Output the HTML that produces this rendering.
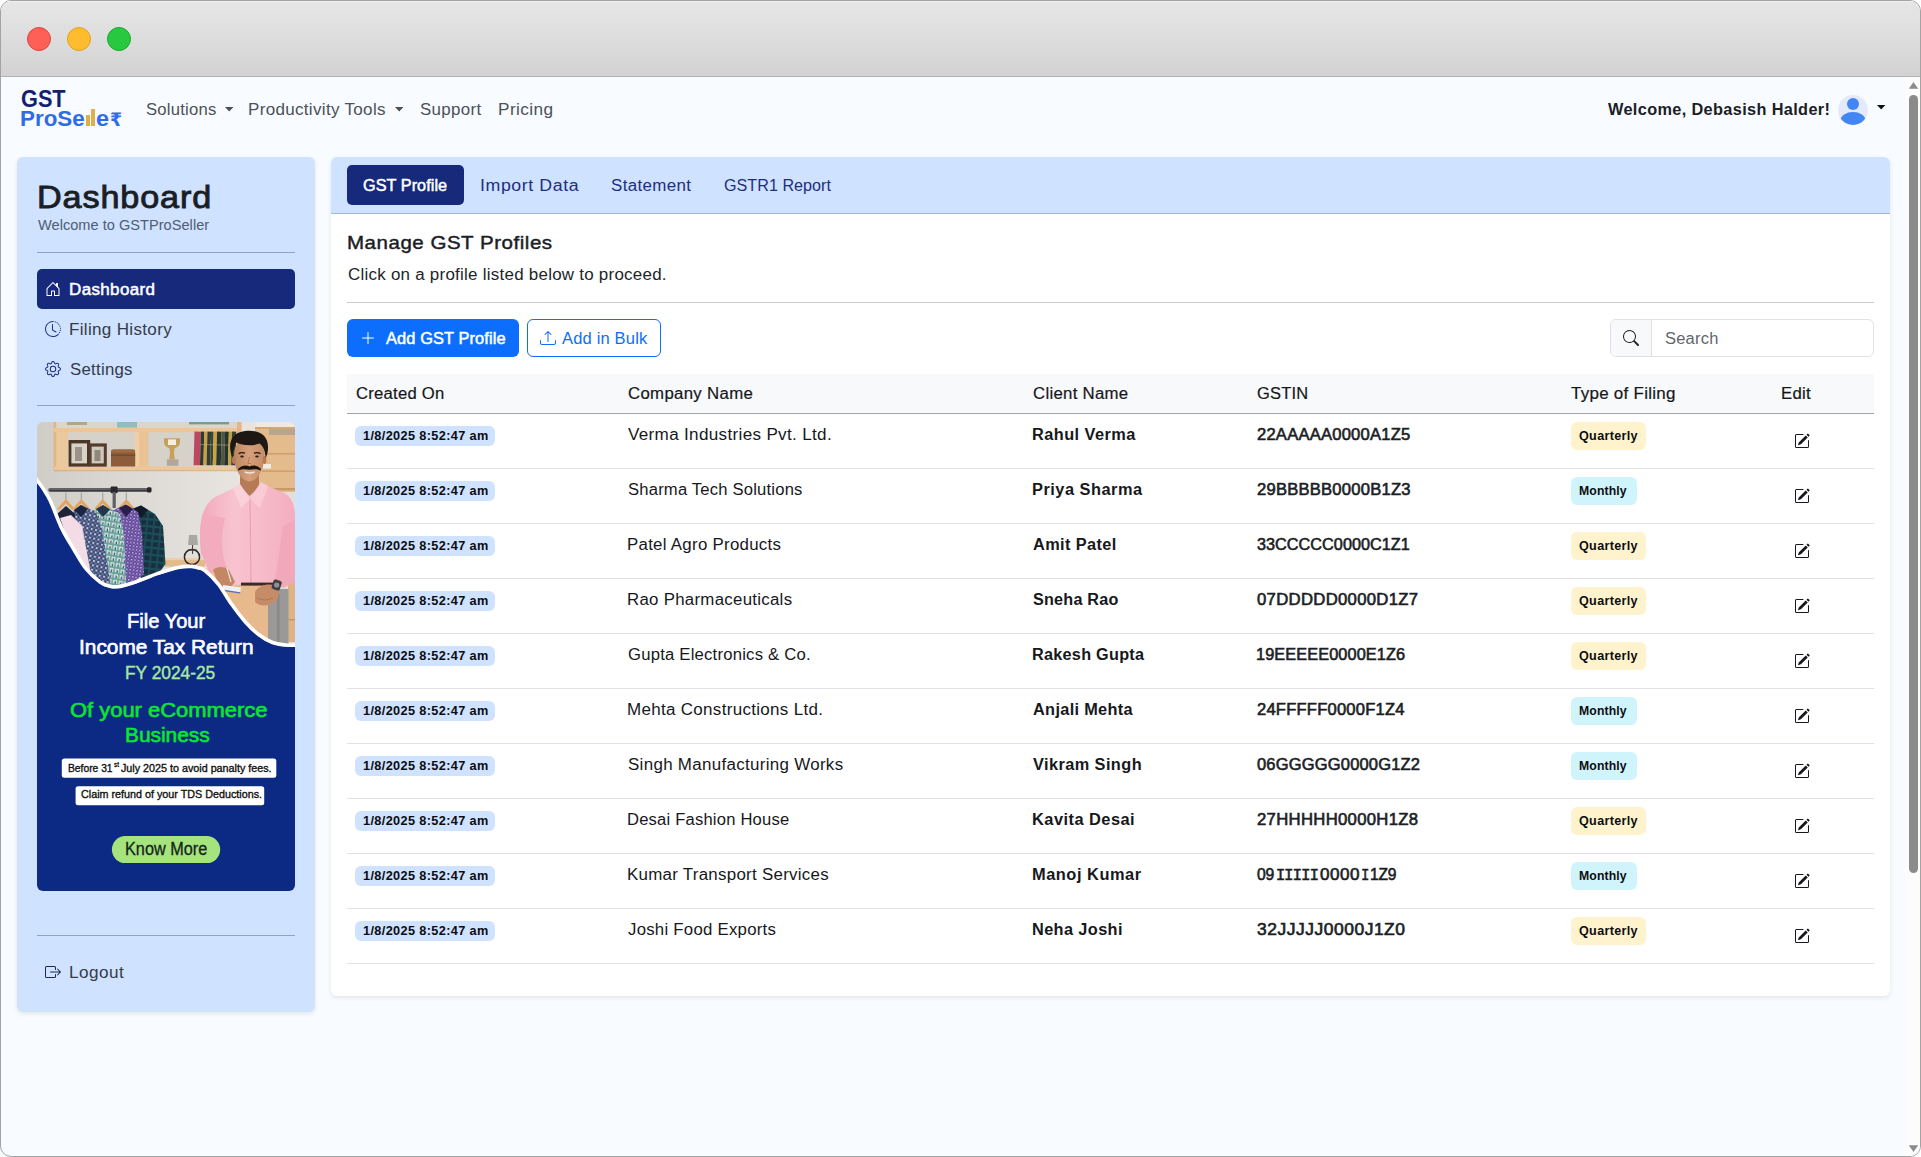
<!DOCTYPE html><html lang="en"><head><meta charset="utf-8"><title>GSTProSeller Dashboard</title><style>
*{box-sizing:border-box}
html,body{margin:0;padding:0}
body{width:1921px;height:1157px;overflow:hidden;background:#fff;font-family:"Liberation Sans",sans-serif}
.a,.t,.ic{position:absolute}
.t{white-space:pre;line-height:1;transform-origin:0 0;display:block}
.win{position:absolute;left:0;top:0;width:1921px;height:1157px;border:1px solid #a3a3a3;border-radius:11px;overflow:hidden;background:#f8fbff}
.tb{left:0;top:0;width:1919px;height:76px;background:linear-gradient(#e6e6e6,#dfdfdf 40%,#d2d2d2);border-bottom:1px solid #b2b2b2;box-shadow:inset 0 1px 0 #f2f2f2}
.dot{width:24px;height:24px;border-radius:50%;top:26px}
.side{left:16px;top:156px;width:298px;height:855px;background:#cfe2ff;border-radius:6px;box-shadow:0 2px 5px rgba(0,0,0,.09)}
.hr{height:1px;background:#8ea3c6}
.card{left:330px;top:156px;width:1559px;height:839px;background:#fff;border-radius:6px;box-shadow:0 2px 5px rgba(0,0,0,.09)}
.chead{left:330px;top:156px;width:1559px;height:57px;background:#cfe2ff;border-radius:6px 6px 0 0;border-bottom:1px solid #a4b6d4}
.pill{background:#16297b;border-radius:5px}
.rb{left:346px;width:1527px;height:1px;background:#dee2e6}
.bd{height:20px;left:354px;width:140px;background:#cfe2ff;border-radius:6px}
.bq{height:28px;left:1570px;width:75px;background:#fff3cd;border-radius:6px}
.bm{height:28px;left:1570px;width:66px;background:#cff4fc;border-radius:6px}
</style></head><body>
<div class="win">
<div class="a tb"></div>
<div class="a dot" style="left:26px;background:#fe5f57;border:1px solid #e0443e"></div>
<div class="a dot" style="left:66px;background:#febc2e;border:1px solid #dea123"></div>
<div class="a dot" style="left:106px;background:#28c840;border:1px solid #1aab29"></div>
<div class="a" style="left:1905px;top:76px;width:14px;height:1080px;background:#fcfcfc"></div>
<div class="a" style="left:1908px;top:94px;width:9px;height:778px;border-radius:4.5px;background:#8b8b8b"></div>
<svg class="ic" style="left:1907px;top:80px" width="11" height="9" viewBox="0 0 11 9"><path d="M5.5 1 L10.2 7.8 H0.8Z" fill="#8b8b8b"/></svg>
<svg class="ic" style="left:1907px;top:1143px" width="11" height="9" viewBox="0 0 11 9"><path d="M5.5 8 L10.2 1.2 H0.8Z" fill="#8b8b8b"/></svg>
<svg class="ic" style="left:224.0px;top:106px" width="8.4" height="4.6" viewBox="0 0 8.4 4.6"><path d="M0 0H8.4L4.2 4.6Z" fill="#4c5158"/></svg>
<svg class="ic" style="left:394.1px;top:106px" width="8.4" height="4.6" viewBox="0 0 8.4 4.6"><path d="M0 0H8.4L4.2 4.6Z" fill="#4c5158"/></svg>
<svg class="ic" style="left:1876.4px;top:104px" width="8.4" height="4.6" viewBox="0 0 8.4 4.6"><path d="M0 0H8.4L4.2 4.6Z" fill="#111"/></svg>
<svg class="ic" style="left:1837px;top:94px" width="30" height="30" viewBox="0 0 30 30"><defs><clipPath id="av"><circle cx="15" cy="15" r="15"/></clipPath></defs><circle cx="15" cy="15" r="15" fill="#e4e9fb"/><g clip-path="url(#av)" fill="#4285f4"><circle cx="15" cy="9" r="6"/><ellipse cx="15" cy="25.5" rx="12.5" ry="8.5"/></g></svg>
<div class="a" style="left:84.6px;top:114px;width:4.6px;height:11px;background:#e2ad45"></div>
<div class="a" style="left:90.2px;top:107.7px;width:4px;height:17.3px;background:#ddb04a"></div>
<div class="a side"></div>
<div class="a hr" style="left:36px;top:251px;width:258px"></div>
<div class="a pill" style="left:36px;top:268px;width:258px;height:40px"></div>
<svg class="ic" style="left:43.5px;top:280px" width="16" height="16" viewBox="0 0 16 16" fill="#ffffff"><path d="M8.354 1.146a.5.5 0 0 0-.708 0l-6 6A.5.5 0 0 0 1.5 7.5v7a.5.5 0 0 0 .5.5h4.5a.5.5 0 0 0 .5-.5v-4h2v4a.5.5 0 0 0 .5.5H14a.5.5 0 0 0 .5-.5v-7a.5.5 0 0 0-.146-.354L13 5.793V2.5a.5.5 0 0 0-.5-.5h-1a.5.5 0 0 0-.5.5v1.293L8.354 1.146ZM2.5 14V7.707l5.5-5.5 5.5 5.5V14H10v-4a.5.5 0 0 0-.5-.5h-3a.5.5 0 0 0-.5.5v4H2.5Z"/></svg>
<svg class="ic" style="left:43.5px;top:320px" width="16" height="16" viewBox="0 0 16 16" fill="#23307c"><path d="M8.515 1.019A7 7 0 0 0 8 1V0a8 8 0 0 1 .589.022l-.074.997zm2.004.45a7.003 7.003 0 0 0-.985-.299l.219-.976c.383.086.76.2 1.126.342l-.36.933zm1.37.71a7.01 7.01 0 0 0-.439-.27l.493-.87a8.025 8.025 0 0 1 .979.654l-.615.789a6.996 6.996 0 0 0-.418-.302zm1.834 1.79a6.99 6.99 0 0 0-.653-.796l.724-.69c.27.285.52.59.747.91l-.818.576zm.744 1.352a7.08 7.08 0 0 0-.214-.468l.893-.45a7.976 7.976 0 0 1 .45 1.088l-.95.313a7.023 7.023 0 0 0-.179-.483zm.53 2.507a6.991 6.991 0 0 0-.1-1.025l.985-.17c.067.386.106.778.116 1.17l-1 .025zm-.131 1.538c.033-.17.06-.339.081-.51l.993.123a7.957 7.957 0 0 1-.23 1.155l-.964-.267c.046-.165.086-.332.12-.501zm-.952 2.379c.184-.29.346-.594.486-.908l.914.405c-.16.36-.345.706-.555 1.038l-.845-.535zm-.964 1.205c.122-.122.239-.248.35-.378l.758.653a8.073 8.073 0 0 1-.401.432l-.707-.707z"/><path d="M8 1a7 7 0 1 0 4.95 11.95l.707.707A8.001 8.001 0 1 1 8 0v1z"/><path d="M7.5 3a.5.5 0 0 1 .5.5v5.21l3.248 1.856a.5.5 0 0 1-.496.868l-3.5-2A.5.5 0 0 1 7 9V3.5a.5.5 0 0 1 .5-.5z"/></svg>
<svg class="ic" style="left:43.5px;top:360px" width="16" height="16" viewBox="0 0 16 16" fill="#23307c"><path d="M8 4.754a3.246 3.246 0 1 0 0 6.492 3.246 3.246 0 0 0 0-6.492zM5.754 8a2.246 2.246 0 1 1 4.492 0 2.246 2.246 0 0 1-4.492 0z"/><path d="M9.796 1.343c-.527-1.79-3.065-1.79-3.592 0l-.094.319a.873.873 0 0 1-1.255.52l-.292-.16c-1.64-.892-3.433.902-2.54 2.541l.159.292a.873.873 0 0 1-.52 1.255l-.319.094c-1.79.527-1.79 3.065 0 3.592l.319.094a.873.873 0 0 1 .52 1.255l-.16.292c-.892 1.64.901 3.434 2.541 2.54l.292-.159a.873.873 0 0 1 1.255.52l.094.319c.527 1.79 3.065 1.79 3.592 0l.094-.319a.873.873 0 0 1 1.255-.52l.292.16c1.64.893 3.434-.902 2.54-2.541l-.159-.292a.873.873 0 0 1 .52-1.255l.319-.094c1.79-.527 1.79-3.065 0-3.592l-.319-.094a.873.873 0 0 1-.52-1.255l.16-.292c.893-1.64-.902-3.433-2.541-2.54l-.292.159a.873.873 0 0 1-1.255-.52l-.094-.319zm-2.633.283c.246-.835 1.428-.835 1.674 0l.094.319a1.873 1.873 0 0 0 2.693 1.115l.291-.16c.764-.415 1.6.42 1.184 1.185l-.159.292a1.873 1.873 0 0 0 1.116 2.692l.318.094c.835.246.835 1.428 0 1.674l-.319.094a1.873 1.873 0 0 0-1.115 2.693l.16.291c.415.764-.42 1.6-1.185 1.184l-.291-.159a1.873 1.873 0 0 0-2.693 1.116l-.094.318c-.246.835-1.428.835-1.674 0l-.094-.319a1.873 1.873 0 0 0-2.692-1.115l-.292.16c-.764.415-1.6-.42-1.184-1.185l.159-.291A1.873 1.873 0 0 0 1.945 8.93l-.319-.094c-.835-.246-.835-1.428 0-1.674l.319-.094A1.873 1.873 0 0 0 3.06 4.377l-.16-.292c-.415-.764.42-1.6 1.185-1.184l.292.159a1.873 1.873 0 0 0 2.692-1.115l.094-.319z"/></svg>
<div class="a hr" style="left:36px;top:404px;width:258px"></div>
<svg class="ic" style="left:36px;top:421px;border-radius:6px" width="258" height="469" viewBox="0 0 258 469"><defs><linearGradient id="wl" x1="0" x2="1"><stop offset="0" stop-color="#d0ccc6"/><stop offset=".35" stop-color="#dcd9d4"/><stop offset=".7" stop-color="#e6e3de"/><stop offset="1" stop-color="#ebe6df"/></linearGradient><linearGradient id="sh" x1="0" x2="1"><stop offset="0" stop-color="#f2a9bb"/><stop offset=".35" stop-color="#f8c3cf"/><stop offset=".7" stop-color="#f6b9c7"/><stop offset="1" stop-color="#f3aebf"/></linearGradient><linearGradient id="fc" x1="0" x2="1"><stop offset="0" stop-color="#bd8560"/><stop offset=".5" stop-color="#d6a07a"/><stop offset="1" stop-color="#c58c67"/></linearGradient><pattern id="chk1" width="4.4" height="4.4" patternUnits="userSpaceOnUse" patternTransform="rotate(12)"><rect width="4.4" height="4.4" fill="#394873"/><rect width="2" height="2" fill="#c3c9dc"/><rect x="2.2" y="2.2" width="2" height="2" fill="#6f7aa3"/></pattern><pattern id="chk2" width="5.6" height="5.6" patternUnits="userSpaceOnUse" patternTransform="rotate(10)"><rect width="5.6" height="5.6" fill="#d7e6e2"/><rect width="5.6" height="1.9" fill="#6aa39b"/><rect width="1.9" height="5.6" fill="#6aa39b" opacity=".85"/><rect x="3.4" y="3.2" width="1.2" height="2.4" fill="#31405e"/></pattern><pattern id="chk3" width="3.4" height="3.4" patternUnits="userSpaceOnUse" patternTransform="rotate(8)"><rect width="3.4" height="3.4" fill="#62489a"/><rect width="1.4" height="1.4" fill="#c9bbe4"/><rect x="1.7" y="1.7" width="1.2" height="1.2" fill="#8d76c0"/></pattern><pattern id="chk4" width="7" height="7" patternUnits="userSpaceOnUse" patternTransform="rotate(6)"><rect width="7" height="7" fill="#1b2d40"/><rect width="7" height="2.2" fill="#185058"/><rect width="2.2" height="7" fill="#185058" opacity=".85"/></pattern></defs><rect width="258" height="240" fill="url(#wl)"/><rect x="17" y="0" width="187" height="48" fill="#d6d1c9"/><rect x="17" y="0" width="187" height="6.4" fill="#dcd5ca"/><rect x="30" y="0" width="20" height="3" fill="#b4a58a"/><rect x="80" y="0" width="20" height="5.6" fill="#93bdb7"/><rect x="152" y="0" width="40" height="2.4" fill="#7f9a8a"/><rect x="18.8" y="9" width="12" height="36" fill="#ecc99d"/><rect x="102" y="9" width="9.5" height="36" fill="#e9c296"/><rect x="16.6" y="0" width="2.6" height="48.4" fill="#e2b684"/><rect x="98" y="8" width="4.2" height="38" fill="#f1cfa3"/><rect x="17" y="6" width="186" height="4.2" fill="#eec596"/><rect x="17" y="44.8" width="186" height="3.6" fill="#efc697"/><rect x="17" y="48.2" width="186" height="1" fill="#c7a071" opacity=".7"/><rect x="200" y="0" width="4.6" height="48.4" fill="#e3b787"/><rect x="31.6" y="18" width="21.6" height="26.6" fill="#4c362a"/><rect x="34.4" y="21.4" width="15.6" height="20" fill="#d8d2c7"/><path d="M38 25h7v14h-7z" fill="#9b9388"/><rect x="51.8" y="21.4" width="18" height="23.2" fill="#553b2c"/><rect x="54.6" y="24.6" width="12.2" height="16.8" fill="#cfc8bc"/><path d="M57.5 28h6v11h-6z" fill="#90877b"/><path d="M74 31 q0-3.4 3.4-3.4 h17.4 q3.4 0 3.4 3.4 v13.5 h-24.2z" fill="#8d5d3b"/><rect x="74" y="32.6" width="24.2" height="1.1" fill="#6b4329"/><rect x="74" y="27.6" width="24.2" height="3" rx="1.5" fill="#9c6b46"/><path d="M127 16.2h16v3.6c0 3.6-2.6 5.8-5.4 6.4l-.6 5 .8 6.4h-5.6l.8-6.4-.6-5c-2.8-.6-5.4-2.8-5.4-6.4z" fill="#c6a15a"/><rect x="131" y="17.4" width="8" height="5.6" fill="#f4efe2"/><rect x="129.8" y="37.4" width="11.6" height="6.4" fill="#b3a79c"/><rect x="156.6" y="9.6" width="6.4" height="33.6" fill="#be4760" transform="rotate(1.5 156.6 43)"/><rect x="163" y="9.6" width="3.4" height="33.6" fill="#2d3a2d" transform="rotate(1.5 163 43)"/><rect x="166.4" y="9.6" width="3.2" height="33.6" fill="#c7a043" transform="rotate(1.5 166.4 43)"/><rect x="169.6" y="9.6" width="3.6" height="33.6" fill="#323d33" transform="rotate(1.5 169.6 43)"/><rect x="173.2" y="9.6" width="2.6" height="33.6" fill="#3a4638" transform="rotate(1.5 173.2 43)"/><rect x="175.8" y="9.6" width="3.4" height="33.6" fill="#c9a340" transform="rotate(1.5 175.8 43)"/><rect x="179.2" y="9.6" width="4.6" height="33.6" fill="#2b352b" transform="rotate(1.5 179.2 43)"/><rect x="183.8" y="9.6" width="3.4" height="33.6" fill="#4a5742" transform="rotate(1.5 183.8 43)"/><rect x="187.2" y="9.6" width="3.8" height="33.6" fill="#28312a" transform="rotate(1.5 187.2 43)"/><rect x="191" y="9.6" width="3.2" height="33.6" fill="#c4a045" transform="rotate(1.5 191 43)"/><rect x="194.2" y="9.6" width="4.2" height="33.6" fill="#36422f" transform="rotate(1.5 194.2 43)"/><rect x="163" y="22" width="33" height="1" fill="#c9b27a" opacity=".55" transform="rotate(1.5 163 43)"/><rect x="205" y="0" width="53" height="70" fill="#e4bb8c"/><rect x="205" y="0" width="13" height="70" fill="#e9e3da"/><rect x="218" y="0" width="40" height="5" fill="#efe9e0"/><rect x="218" y="5" width="40" height="2" fill="#d3a878"/><rect x="232" y="7" width="26" height="6" fill="#b9a58e"/><rect x="225" y="31" width="33" height="1.6" fill="#cfa071"/><rect x="225" y="48.4" width="33" height="1.6" fill="#cfa071"/><rect x="222" y="66" width="36" height="2.4" fill="#c89a6a"/><rect x="226" y="42" width="8" height="4.6" fill="#f2ede4"/><rect x="205" y="70" width="53" height="170" fill="#e3ded6"/><rect x="251" y="158" width="7" height="62" fill="#deb487"/><rect x="251" y="197" width="7" height="1.4" fill="#c39a6c"/><rect x="128" y="136.6" width="40" height="8" fill="#e3ba8b"/><rect x="128" y="136.6" width="40" height="1.6" fill="#efd0a6"/><circle cx="155" cy="135" r="7.6" fill="none" stroke="#2b2928" stroke-width="1.5"/><path d="M152 113h8l1 10h-10z" fill="#a9a8a4"/><path d="M155.6 123v9M151 128l9 0" stroke="#3a3836" stroke-width="1"/><rect x="11.4" y="66" width="103" height="3.8" rx="1.8" fill="#3b3a3d"/><rect x="11.4" y="66.6" width="103" height="1" rx=".5" fill="#8c8c90"/><rect x="73.6" y="64.6" width="7" height="6.6" rx="1" fill="#29282b"/><rect x="75.6" y="70" width="3.2" height="16" fill="#606064"/><rect x="110" y="65.2" width="4.4" height="5.4" rx="1.4" fill="#242326"/><path d="M28.9 70.5v7" stroke="#8d8d90" stroke-width=".8"/><path d="M28.9 77 L37.4 86.5 L35.4 88 L28.9 81.6 L22.4 88 L20.4 86.5Z" fill="#e2a560"/><path d="M44.3 70.5v7" stroke="#8d8d90" stroke-width=".8"/><path d="M44.3 77 L52.8 86.5 L50.8 88 L44.3 81.6 L37.8 88 L35.8 86.5Z" fill="#e2a560"/><path d="M65.8 70.5v7" stroke="#8d8d90" stroke-width=".8"/><path d="M65.8 77 L74.3 86.5 L72.3 88 L65.8 81.6 L59.3 88 L57.3 86.5Z" fill="#e2a560"/><path d="M89.3 70.5v7" stroke="#8d8d90" stroke-width=".8"/><path d="M89.3 77 L97.8 86.5 L95.8 88 L89.3 81.6 L82.8 88 L80.8 86.5Z" fill="#e2a560"/><path d="M92 88 L104 83.5 L118 92 L126 104 L128.5 142 L122 151 L104 157 L98 120Z" fill="url(#chk4)"/><path d="M96 87 L104 83.5 L111 88 L104 96Z" fill="#101a28"/><path d="M72 90 L89 82.5 L101 90 L105 110 L107 152 L98 159 L84 163 L78 120Z" fill="url(#chk3)"/><path d="M82 86 L89 82.5 L96 87 L89 95Z" fill="#2a1f4a"/><path d="M50 92 L66 83 L83 92 L87 112 L89 161 L72 166 L62 161 L56 120Z" fill="url(#chk2)"/><path d="M59 87 L66 83 L73 87.5 L66 95Z" fill="#23364a"/><path d="M31 93 L44 83 L59 90 L65 108 L73 159 L66 165 L52 155 L42 122Z" fill="url(#chk1)"/><path d="M37 88 L44 83 L51 87 L44 95Z" fill="#1b2440"/><path d="M20 92 L29 84 L38 92 L36 112 L24 112Z" fill="#1c2238"/><path d="M23 96 L34 93 L45 104 L54 152 L40 142 L30 116Z" fill="#f4dce7"/><path d="M34 94 L45 104 L47 118" stroke="#e3c3d3" stroke-width=".8" fill="none"/><rect x="231" y="167" width="20.5" height="62" fill="#9a9998"/><rect x="240" y="172" width="2.6" height="57" fill="#8b8a89"/><path d="M168 146 L231 160 L231 230 L186 230 L168 190Z" fill="#e8b98d"/><path d="M168 146 L198 152 L231 160 L231 166 L168 150Z" fill="#f2cda6"/><path d="M203 52h19v14l-9.5 8-9.5-8z" fill="#b67a57"/><path d="M164 132 C161 104 164 84 178 75 L203 63 L213 75 L224 61 L247 71 C255 75 258 84 258 94 L258 158 L246 164 L236 161 L196 163 L186 160 L176 150 Z" fill="url(#sh)"/><path d="M213 76 L214 162" stroke="#e9a0b3" stroke-width="1.1"/><path d="M203 62 L213 77 L204 86 L196 66Z" fill="#fad0da"/><path d="M224 60 L213 77 L223 86 L231 64Z" fill="#f9cbd6"/><path d="M166 92 C161 112 163 136 174 152 L190 146 C183 130 184 112 188 96Z" fill="#f3acbd"/><path d="M176 148 C180 144 188 144 192 148 L198 160 L192 167 L182 164Z" fill="#c38763"/><path d="M186 163 l18 2.6 l-.8 5.4 l-18 -2.6z" fill="#eef2f8"/><path d="M185.4 167.6 l18 2.6 l-.2 1.4 l-18 -2.6z" fill="#5b6fb3"/><path d="M190 146 l4 14" stroke="#e8e8ee" stroke-width="1.1"/><rect x="204" y="160.6" width="32" height="3" fill="#3b2a25"/><path d="M246 104 L258 98 L258 160 L246 166 L238 160Z" fill="#f1a9ba"/><path d="M218 170 C222 162 236 160 242 166 L241 176 C236 184 224 186 218 180Z" fill="#c68c67"/><path d="M220 176 q8 4 16 0" stroke="#a9714f" stroke-width=".8" fill="none"/><rect x="235.4" y="158" width="8.6" height="10" rx="2" fill="#3f3f44" transform="rotate(18 239.7 163)"/><circle cx="239.7" cy="163" r="2.6" fill="#8f9198"/><path d="M197 34 C197 22 203 16 212.5 16 C222 16 227.6 22 227.4 34 C227.4 46 221 59.4 212.5 59.4 C204 59.4 197 46 197 34Z" fill="url(#fc)"/><ellipse cx="196.8" cy="38" rx="1.8" ry="4" fill="#b67a57"/><ellipse cx="227.6" cy="38" rx="1.8" ry="4" fill="#b67a57"/><path d="M195.4 36 C190 22 194 10.5 208 9 C220 7.4 231.5 12 231 26 C231 30 230 33.5 228.6 36 C228.4 29 226 24 222.5 21.6 C215 24.6 204.6 23.4 199.6 20.6 C196.8 24.6 195.6 30 195.4 36Z" fill="#1e1815"/><path d="M201.4 46.6 C205 42.8 209.6 42.8 212.5 44.4 C215.4 42.8 220 42.8 223.6 46.6 L224 48.6 C219.4 46.6 216 47.4 212.5 47.8 C209 47.4 205.6 46.6 201 48.6Z" fill="#1b1512"/><path d="M207.6 49.8 q5 2.4 10 0" stroke="#efe7e0" stroke-width="1.3" fill="none"/><path d="M201.6 31.6 q3-1.6 6.4-.4" stroke="#1f1713" stroke-width="1.3" fill="none"/><path d="M217 31.2 q3.4-1.2 6.4.4" stroke="#1f1713" stroke-width="1.3" fill="none"/><ellipse cx="205" cy="34.6" rx="1.8" ry="1" fill="#2a1c16"/><ellipse cx="220" cy="34.6" rx="1.8" ry="1" fill="#2a1c16"/><path d="M212.5 35 l-1.6 6.6 h3.4" stroke="#ad7350" stroke-width=".9" fill="none"/><path d="M-3.0 55.0C-2.5 55.8 -1.5 57.6 0.0 59.8C1.5 62.0 3.8 64.5 6.0 68.0C8.2 71.5 10.3 73.9 13.4 80.6C16.5 87.3 21.0 100.1 24.8 108.0C28.6 115.9 32.3 121.4 36.3 128.1C40.3 134.8 44.5 142.7 49.0 148.3C53.5 153.9 59.3 158.8 63.1 161.7C66.9 164.6 69.1 164.7 72.0 165.5C74.9 166.3 76.9 166.7 80.6 166.3C84.3 165.9 89.4 164.5 94.0 163.1C98.6 161.7 103.5 159.7 108.0 158.0C112.5 156.3 115.4 154.8 120.9 153.0C126.4 151.2 135.4 148.2 141.0 147.0C146.6 145.8 151.1 145.9 154.4 146.0C157.7 146.1 158.8 146.6 161.0 147.3C163.2 148.0 164.5 147.6 167.9 150.3C171.3 153.0 176.8 158.1 181.3 163.7C185.8 169.3 190.2 177.6 194.7 183.9C199.2 190.2 203.7 196.3 208.2 201.3C212.7 206.3 217.1 210.7 221.6 214.1C226.1 217.5 230.5 220.2 235.0 221.9C239.5 223.7 244.2 224.1 248.5 224.6C252.8 225.1 258.9 224.8 261.0 224.8L261 472L-3 472Z" fill="#0c2a84"/><path d="M-3.0 55.0C-2.5 55.8 -1.5 57.6 0.0 59.8C1.5 62.0 3.8 64.5 6.0 68.0C8.2 71.5 10.3 73.9 13.4 80.6C16.5 87.3 21.0 100.1 24.8 108.0C28.6 115.9 32.3 121.4 36.3 128.1C40.3 134.8 44.5 142.7 49.0 148.3C53.5 153.9 59.3 158.8 63.1 161.7C66.9 164.6 69.1 164.7 72.0 165.5C74.9 166.3 76.9 166.7 80.6 166.3C84.3 165.9 89.4 164.5 94.0 163.1C98.6 161.7 103.5 159.7 108.0 158.0C112.5 156.3 115.4 154.8 120.9 153.0C126.4 151.2 135.4 148.2 141.0 147.0C146.6 145.8 151.1 145.9 154.4 146.0C157.7 146.1 158.8 146.6 161.0 147.3C163.2 148.0 164.5 147.6 167.9 150.3C171.3 153.0 176.8 158.1 181.3 163.7C185.8 169.3 190.2 177.6 194.7 183.9C199.2 190.2 203.7 196.3 208.2 201.3C212.7 206.3 217.1 210.7 221.6 214.1C226.1 217.5 230.5 220.2 235.0 221.9C239.5 223.7 244.2 224.1 248.5 224.6C252.8 225.1 258.9 224.8 261.0 224.8" fill="none" stroke="#ffffff" stroke-width="3.6" transform="translate(0,-1.6)"/><rect x="24.8" y="336.4" width="214.5" height="19.4" rx="2.5" fill="#ffffff"/><rect x="38.6" y="364.2" width="188.6" height="19" rx="2.5" fill="#ffffff"/><rect x="74.9" y="414.1" width="108.3" height="27" rx="13.5" fill="#a5e37d"/></svg>
<div class="a hr" style="left:36px;top:934px;width:258px"></div>
<svg class="ic" style="left:44px;top:963px" width="16" height="16" viewBox="0 0 16 16" fill="#1d2750"><path fill-rule="evenodd" d="M10 12.5a.5.5 0 0 1-.5.5h-8a.5.5 0 0 1-.5-.5v-9a.5.5 0 0 1 .5-.5h8a.5.5 0 0 1 .5.5v2a.5.5 0 0 0 1 0v-2A1.5 1.5 0 0 0 9.5 2h-8A1.5 1.5 0 0 0 0 3.5v9A1.5 1.5 0 0 0 1.5 14h8a1.5 1.5 0 0 0 1.5-1.5v-2a.5.5 0 0 0-1 0v2z"/><path fill-rule="evenodd" d="M15.854 8.354a.5.5 0 0 0 0-.708l-3-3a.5.5 0 0 0-.708.708L14.293 7.5H5.5a.5.5 0 0 0 0 1h8.793l-2.147 2.146a.5.5 0 0 0 .708.708l3-3z"/></svg>
<div class="a card"></div><div class="a chead"></div>
<div class="a pill" style="left:346px;top:164px;width:117px;height:40px"></div>
<div class="a" style="left:346px;top:301px;width:1527px;height:1px;background:#c9cacb"></div>
<div class="a" style="left:346px;top:318px;width:172px;height:38px;border-radius:6px;background:#0d6efd"></div>
<svg class="ic" style="left:359px;top:329.3px" width="16" height="16" viewBox="0 0 16 16" fill="#ffffff"><path fill-rule="evenodd" d="M8 2a.5.5 0 0 1 .5.5v5h5a.5.5 0 0 1 0 1h-5v5a.5.5 0 0 1-1 0v-5h-5a.5.5 0 0 1 0-1h5v-5A.5.5 0 0 1 8 2Z"/></svg>
<div class="a" style="left:526px;top:318px;width:134px;height:38px;border-radius:6px;background:#fff;border:1px solid #0d6efd"></div>
<svg class="ic" style="left:539px;top:329.3px" width="16" height="16" viewBox="0 0 16 16" fill="#0d6efd"><path d="M.5 9.9a.5.5 0 0 1 .5.5v2.5a1 1 0 0 0 1 1h12a1 1 0 0 0 1-1v-2.5a.5.5 0 0 1 1 0v2.5a2 2 0 0 1-2 2H2a2 2 0 0 1-2-2v-2.5a.5.5 0 0 1 .5-.5z"/><path d="M7.646 1.146a.5.5 0 0 1 .708 0l3 3a.5.5 0 0 1-.708.708L8.500 2.707V11.5a.5.5 0 0 1-1 0V2.707L5.354 4.854a.5.5 0 1 1-.708-.708l3-3z"/></svg>
<div class="a" style="left:1609px;top:318px;width:264px;height:38px;border-radius:6px;background:#fff;border:1px solid #dee2e6;overflow:hidden"><div style="width:41px;height:36px;background:#f8f9fa;border-right:1px solid #dee2e6"></div></div>
<svg class="ic" style="left:1622px;top:329.3px" width="16" height="16" viewBox="0 0 16 16" fill="#212529"><path d="M11.742 10.344a6.5 6.5 0 1 0-1.397 1.398h-.001c.03.04.062.078.098.115l3.85 3.85a1 1 0 0 0 1.415-1.414l-3.85-3.85a1.007 1.007 0 0 0-.115-.1zM12 6.500a5.500 5.500 0 1 1-11 0 5.500 5.500 0 0 1 11 0z"/></svg>
<div class="a" style="left:346px;top:373px;width:1527px;height:39px;background:#f8f9fa"></div>
<div class="a" style="left:346px;top:412px;width:1527px;height:1px;background:#a3a6a9"></div>
<div class="a rb" style="top:467px"></div>
<div class="a bd" style="top:425px"></div>
<div class="a bq" style="top:421px"></div>
<svg class="ic" style="left:1792.7px;top:432px" width="16" height="16" viewBox="0 0 16 16" fill="#16181b"><path d="M15.502 1.940a.5.5 0 0 1 0 .706L14.459 3.690l-2-2L13.502.646a.5.5 0 0 1 .707 0l1.293 1.293zm-1.750 2.456-2-2L4.939 9.210a.5.5 0 0 0-.121.196l-.805 2.414a.25.25 0 0 0 .316.316l2.414-.805a.5.5 0 0 0 .196-.12l6.813-6.814z"/><path fill-rule="evenodd" d="M1 13.500A1.500 1.500 0 0 0 2.500 15h11a1.500 1.500 0 0 0 1.500-1.500v-6a.5.5 0 0 0-1 0v6a.5.5 0 0 1-.5.5h-11a.5.5 0 0 1-.5-.5v-11a.5.5 0 0 1 .5-.5H9a.5.5 0 0 0 0-1H2.500A1.500 1.500 0 0 0 1 2.500v11z"/></svg>
<div class="a rb" style="top:522px"></div>
<div class="a bd" style="top:480px"></div>
<div class="a bm" style="top:476px"></div>
<svg class="ic" style="left:1792.7px;top:487px" width="16" height="16" viewBox="0 0 16 16" fill="#16181b"><path d="M15.502 1.940a.5.5 0 0 1 0 .706L14.459 3.690l-2-2L13.502.646a.5.5 0 0 1 .707 0l1.293 1.293zm-1.750 2.456-2-2L4.939 9.210a.5.5 0 0 0-.121.196l-.805 2.414a.25.25 0 0 0 .316.316l2.414-.805a.5.5 0 0 0 .196-.12l6.813-6.814z"/><path fill-rule="evenodd" d="M1 13.500A1.500 1.500 0 0 0 2.500 15h11a1.500 1.500 0 0 0 1.500-1.500v-6a.5.5 0 0 0-1 0v6a.5.5 0 0 1-.5.5h-11a.5.5 0 0 1-.5-.5v-11a.5.5 0 0 1 .5-.5H9a.5.5 0 0 0 0-1H2.500A1.500 1.500 0 0 0 1 2.500v11z"/></svg>
<div class="a rb" style="top:577px"></div>
<div class="a bd" style="top:535px"></div>
<div class="a bq" style="top:531px"></div>
<svg class="ic" style="left:1792.7px;top:542px" width="16" height="16" viewBox="0 0 16 16" fill="#16181b"><path d="M15.502 1.940a.5.5 0 0 1 0 .706L14.459 3.690l-2-2L13.502.646a.5.5 0 0 1 .707 0l1.293 1.293zm-1.750 2.456-2-2L4.939 9.210a.5.5 0 0 0-.121.196l-.805 2.414a.25.25 0 0 0 .316.316l2.414-.805a.5.5 0 0 0 .196-.12l6.813-6.814z"/><path fill-rule="evenodd" d="M1 13.500A1.500 1.500 0 0 0 2.500 15h11a1.500 1.500 0 0 0 1.500-1.500v-6a.5.5 0 0 0-1 0v6a.5.5 0 0 1-.5.5h-11a.5.5 0 0 1-.5-.5v-11a.5.5 0 0 1 .5-.5H9a.5.5 0 0 0 0-1H2.500A1.500 1.500 0 0 0 1 2.500v11z"/></svg>
<div class="a rb" style="top:632px"></div>
<div class="a bd" style="top:590px"></div>
<div class="a bq" style="top:586px"></div>
<svg class="ic" style="left:1792.7px;top:597px" width="16" height="16" viewBox="0 0 16 16" fill="#16181b"><path d="M15.502 1.940a.5.5 0 0 1 0 .706L14.459 3.690l-2-2L13.502.646a.5.5 0 0 1 .707 0l1.293 1.293zm-1.750 2.456-2-2L4.939 9.210a.5.5 0 0 0-.121.196l-.805 2.414a.25.25 0 0 0 .316.316l2.414-.805a.5.5 0 0 0 .196-.12l6.813-6.814z"/><path fill-rule="evenodd" d="M1 13.500A1.500 1.500 0 0 0 2.500 15h11a1.500 1.500 0 0 0 1.500-1.500v-6a.5.5 0 0 0-1 0v6a.5.5 0 0 1-.5.5h-11a.5.5 0 0 1-.5-.5v-11a.5.5 0 0 1 .5-.5H9a.5.5 0 0 0 0-1H2.500A1.500 1.500 0 0 0 1 2.500v11z"/></svg>
<div class="a rb" style="top:687px"></div>
<div class="a bd" style="top:645px"></div>
<div class="a bq" style="top:641px"></div>
<svg class="ic" style="left:1792.7px;top:652px" width="16" height="16" viewBox="0 0 16 16" fill="#16181b"><path d="M15.502 1.940a.5.5 0 0 1 0 .706L14.459 3.690l-2-2L13.502.646a.5.5 0 0 1 .707 0l1.293 1.293zm-1.750 2.456-2-2L4.939 9.210a.5.5 0 0 0-.121.196l-.805 2.414a.25.25 0 0 0 .316.316l2.414-.805a.5.5 0 0 0 .196-.12l6.813-6.814z"/><path fill-rule="evenodd" d="M1 13.500A1.500 1.500 0 0 0 2.500 15h11a1.500 1.500 0 0 0 1.500-1.500v-6a.5.5 0 0 0-1 0v6a.5.5 0 0 1-.5.5h-11a.5.5 0 0 1-.5-.5v-11a.5.5 0 0 1 .5-.5H9a.5.5 0 0 0 0-1H2.500A1.500 1.500 0 0 0 1 2.500v11z"/></svg>
<div class="a rb" style="top:742px"></div>
<div class="a bd" style="top:700px"></div>
<div class="a bm" style="top:696px"></div>
<svg class="ic" style="left:1792.7px;top:707px" width="16" height="16" viewBox="0 0 16 16" fill="#16181b"><path d="M15.502 1.940a.5.5 0 0 1 0 .706L14.459 3.690l-2-2L13.502.646a.5.5 0 0 1 .707 0l1.293 1.293zm-1.750 2.456-2-2L4.939 9.210a.5.5 0 0 0-.121.196l-.805 2.414a.25.25 0 0 0 .316.316l2.414-.805a.5.5 0 0 0 .196-.12l6.813-6.814z"/><path fill-rule="evenodd" d="M1 13.500A1.500 1.500 0 0 0 2.500 15h11a1.500 1.500 0 0 0 1.500-1.500v-6a.5.5 0 0 0-1 0v6a.5.5 0 0 1-.5.5h-11a.5.5 0 0 1-.5-.5v-11a.5.5 0 0 1 .5-.5H9a.5.5 0 0 0 0-1H2.500A1.500 1.500 0 0 0 1 2.500v11z"/></svg>
<div class="a rb" style="top:797px"></div>
<div class="a bd" style="top:755px"></div>
<div class="a bm" style="top:751px"></div>
<svg class="ic" style="left:1792.7px;top:762px" width="16" height="16" viewBox="0 0 16 16" fill="#16181b"><path d="M15.502 1.940a.5.5 0 0 1 0 .706L14.459 3.690l-2-2L13.502.646a.5.5 0 0 1 .707 0l1.293 1.293zm-1.750 2.456-2-2L4.939 9.210a.5.5 0 0 0-.121.196l-.805 2.414a.25.25 0 0 0 .316.316l2.414-.805a.5.5 0 0 0 .196-.12l6.813-6.814z"/><path fill-rule="evenodd" d="M1 13.500A1.500 1.500 0 0 0 2.500 15h11a1.500 1.500 0 0 0 1.500-1.500v-6a.5.5 0 0 0-1 0v6a.5.5 0 0 1-.5.5h-11a.5.5 0 0 1-.5-.5v-11a.5.5 0 0 1 .5-.5H9a.5.5 0 0 0 0-1H2.500A1.500 1.500 0 0 0 1 2.500v11z"/></svg>
<div class="a rb" style="top:852px"></div>
<div class="a bd" style="top:810px"></div>
<div class="a bq" style="top:806px"></div>
<svg class="ic" style="left:1792.7px;top:817px" width="16" height="16" viewBox="0 0 16 16" fill="#16181b"><path d="M15.502 1.940a.5.5 0 0 1 0 .706L14.459 3.690l-2-2L13.502.646a.5.5 0 0 1 .707 0l1.293 1.293zm-1.750 2.456-2-2L4.939 9.210a.5.5 0 0 0-.121.196l-.805 2.414a.25.25 0 0 0 .316.316l2.414-.805a.5.5 0 0 0 .196-.12l6.813-6.814z"/><path fill-rule="evenodd" d="M1 13.500A1.500 1.500 0 0 0 2.500 15h11a1.500 1.500 0 0 0 1.500-1.500v-6a.5.5 0 0 0-1 0v6a.5.5 0 0 1-.5.5h-11a.5.5 0 0 1-.5-.5v-11a.5.5 0 0 1 .5-.5H9a.5.5 0 0 0 0-1H2.500A1.500 1.500 0 0 0 1 2.500v11z"/></svg>
<div class="a rb" style="top:907px"></div>
<div class="a bd" style="top:865px"></div>
<div class="a bm" style="top:861px"></div>
<svg class="ic" style="left:1792.7px;top:872px" width="16" height="16" viewBox="0 0 16 16" fill="#16181b"><path d="M15.502 1.940a.5.5 0 0 1 0 .706L14.459 3.690l-2-2L13.502.646a.5.5 0 0 1 .707 0l1.293 1.293zm-1.750 2.456-2-2L4.939 9.210a.5.5 0 0 0-.121.196l-.805 2.414a.25.25 0 0 0 .316.316l2.414-.805a.5.5 0 0 0 .196-.12l6.813-6.814z"/><path fill-rule="evenodd" d="M1 13.500A1.500 1.500 0 0 0 2.500 15h11a1.500 1.500 0 0 0 1.500-1.500v-6a.5.5 0 0 0-1 0v6a.5.5 0 0 1-.5.5h-11a.5.5 0 0 1-.5-.5v-11a.5.5 0 0 1 .5-.5H9a.5.5 0 0 0 0-1H2.500A1.500 1.500 0 0 0 1 2.500v11z"/></svg>
<div class="a rb" style="top:962px"></div>
<div class="a bd" style="top:920px"></div>
<div class="a bq" style="top:916px"></div>
<svg class="ic" style="left:1792.7px;top:927px" width="16" height="16" viewBox="0 0 16 16" fill="#16181b"><path d="M15.502 1.940a.5.5 0 0 1 0 .706L14.459 3.690l-2-2L13.502.646a.5.5 0 0 1 .707 0l1.293 1.293zm-1.750 2.456-2-2L4.939 9.210a.5.5 0 0 0-.121.196l-.805 2.414a.25.25 0 0 0 .316.316l2.414-.805a.5.5 0 0 0 .196-.12l6.813-6.814z"/><path fill-rule="evenodd" d="M1 13.500A1.500 1.500 0 0 0 2.500 15h11a1.500 1.500 0 0 0 1.500-1.500v-6a.5.5 0 0 0-1 0v6a.5.5 0 0 1-.5.5h-11a.5.5 0 0 1-.5-.5v-11a.5.5 0 0 1 .5-.5H9a.5.5 0 0 0 0-1H2.500A1.500 1.500 0 0 0 1 2.500v11z"/></svg>
<div class="a" style="left:-1px;top:-1px;width:0;height:0"><nav>
<span class="t" style="left:145.50px;top:102.00px;font-size:16px;color:#4c5158;letter-spacing:0.213px;transform:scaleX(1.0404);">Solutions</span>
<span class="t" style="left:248.44px;top:102.00px;font-size:16px;color:#4c5158;letter-spacing:0.293px;transform:scaleX(1.0644);">Productivity Tools</span>
<span class="t" style="left:419.50px;top:102.00px;font-size:16px;color:#4c5158;letter-spacing:0.326px;transform:scaleX(1.0547);">Support</span>
<span class="t" style="left:497.67px;top:102.00px;font-size:16px;color:#4c5158;letter-spacing:0.371px;transform:scaleX(1.0765);">Pricing</span>
<span class="t" style="left:1608.10px;top:102.00px;font-size:16px;color:#1b1e25;font-weight:700;letter-spacing:0.355px;transform:scaleX(1.0178);">Welcome, Debasish Halder!</span>
</nav>
<aside>
<span class="t" style="left:37.01px;top:181.00px;font-size:32px;color:#1b1e25;letter-spacing:0.812px;transform:scaleX(1.0682);-webkit-text-stroke:0.9px #1b1e25;">Dashboard</span>
<span class="t" style="left:37.50px;top:218.00px;font-size:14.5px;color:#4f5d73;letter-spacing:0.025px;transform:scaleX(1.0048);">Welcome to GSTProSeller</span>
<span class="t" style="left:68.89px;top:282.00px;font-size:16px;color:#ffffff;letter-spacing:0.360px;transform:scaleX(1.0599);-webkit-text-stroke:0.5px #ffffff;">Dashboard</span>
<span class="t" style="left:68.63px;top:322.00px;font-size:16px;color:#353b47;letter-spacing:0.293px;transform:scaleX(1.0665);">Filing History</span>
<span class="t" style="left:69.70px;top:362.00px;font-size:16px;color:#353b47;letter-spacing:0.255px;transform:scaleX(1.0486);">Settings</span>
<span class="t" style="left:68.53px;top:965.00px;font-size:16px;color:#353b47;letter-spacing:0.427px;transform:scaleX(1.0706);">Logout</span>
</aside>
<main>
<span class="t" style="left:363.35px;top:178.00px;font-size:16px;color:#ffffff;letter-spacing:0.068px;transform:scaleX(1.0124);-webkit-text-stroke:0.5px #ffffff;">GST Profile</span>
<span class="t" style="left:479.59px;top:178.00px;font-size:16px;color:#1d2e80;letter-spacing:0.538px;transform:scaleX(1.1082);">Import Data</span>
<span class="t" style="left:611.10px;top:178.00px;font-size:16px;color:#1d2e80;letter-spacing:0.336px;transform:scaleX(1.0581);">Statement</span>
<span class="t" style="left:724.10px;top:178.00px;font-size:16px;color:#1d2e80;letter-spacing:0.041px;transform:scaleX(1.0064);">GSTR1 Report</span>
<span class="t" style="left:346.65px;top:233.00px;font-size:19px;color:#1b1e25;letter-spacing:0.488px;transform:scaleX(1.0788);-webkit-text-stroke:0.45px #1b1e25;">Manage GST Profiles</span>
<span class="t" style="left:347.50px;top:267.00px;font-size:16px;color:#212529;letter-spacing:0.249px;transform:scaleX(1.0573);">Click on a profile listed below to proceed.</span>
<span class="t" style="left:386.00px;top:331.00px;font-size:16px;color:#ffffff;letter-spacing:0.120px;transform:scaleX(1.0223);-webkit-text-stroke:0.5px #ffffff;">Add GST Profile</span>
<span class="t" style="left:561.75px;top:331.00px;font-size:16px;color:#0d6efd;letter-spacing:0.167px;transform:scaleX(1.0316);">Add in Bulk</span>
<span class="t" style="left:1664.80px;top:331.00px;font-size:16px;color:#5f666d;letter-spacing:0.202px;transform:scaleX(1.0314);">Search</span>
<span class="t" style="left:355.50px;top:386.00px;font-size:16px;color:#15171a;letter-spacing:0.234px;transform:scaleX(1.0402);-webkit-text-stroke:0.2px #15171a;">Created On</span>
<span class="t" style="left:628.40px;top:386.00px;font-size:16px;color:#15171a;letter-spacing:0.319px;transform:scaleX(1.0477);-webkit-text-stroke:0.2px #15171a;">Company Name</span>
<span class="t" style="left:1032.70px;top:386.00px;font-size:16px;color:#15171a;letter-spacing:0.270px;transform:scaleX(1.0481);-webkit-text-stroke:0.2px #15171a;">Client Name</span>
<span class="t" style="left:1256.60px;top:386.00px;font-size:16px;color:#15171a;letter-spacing:0.220px;transform:scaleX(1.0281);-webkit-text-stroke:0.2px #15171a;">GSTIN</span>
<span class="t" style="left:1571.10px;top:386.00px;font-size:16px;color:#15171a;letter-spacing:0.269px;transform:scaleX(1.0588);-webkit-text-stroke:0.2px #15171a;">Type of Filing</span>
<span class="t" style="left:1780.65px;top:386.00px;font-size:16px;color:#15171a;letter-spacing:0.265px;transform:scaleX(1.0459);-webkit-text-stroke:0.2px #15171a;">Edit</span>
<span class="t" style="left:362.50px;top:430.00px;font-size:12px;color:#0b0d10;font-weight:700;letter-spacing:0.343px;transform:scaleX(1.0587);">1/8/2025 8:52:47 am</span>
<span class="t" style="left:628.30px;top:427.00px;font-size:16px;color:#16181b;letter-spacing:0.305px;transform:scaleX(1.0672);">Verma Industries Pvt. Ltd.</span>
<span class="t" style="left:1031.68px;top:427.00px;font-size:16px;color:#16181b;font-weight:700;letter-spacing:0.437px;transform:scaleX(1.0199);">Rahul Verma</span>
<span class="t" style="left:1256.90px;top:427.00px;font-size:16px;color:#1b1e25;letter-spacing:0.227px;transform:scaleX(1.0339);-webkit-text-stroke:0.6px #1b1e25;">22AAAAA0000A1Z5</span>
<span class="t" style="left:1579.00px;top:430.00px;font-size:12px;color:#0b0d10;font-weight:700;letter-spacing:0.311px;transform:scaleX(1.0486);">Quarterly</span>
<span class="t" style="left:362.50px;top:485.00px;font-size:12px;color:#0b0d10;font-weight:700;letter-spacing:0.343px;transform:scaleX(1.0587);">1/8/2025 8:52:47 am</span>
<span class="t" style="left:628.30px;top:482.00px;font-size:16px;color:#16181b;letter-spacing:0.196px;transform:scaleX(1.0371);">Sharma Tech Solutions</span>
<span class="t" style="left:1031.68px;top:482.00px;font-size:16px;color:#16181b;font-weight:700;letter-spacing:0.486px;transform:scaleX(1.0231);">Priya Sharma</span>
<span class="t" style="left:1256.90px;top:482.00px;font-size:16px;color:#1b1e25;letter-spacing:0.235px;transform:scaleX(1.0352);-webkit-text-stroke:0.6px #1b1e25;">29BBBBB0000B1Z3</span>
<span class="t" style="left:1579.20px;top:485.00px;font-size:12px;color:#0b0d10;font-weight:700;letter-spacing:0.130px;transform:scaleX(1.0171);">Monthly</span>
<span class="t" style="left:362.50px;top:540.00px;font-size:12px;color:#0b0d10;font-weight:700;letter-spacing:0.343px;transform:scaleX(1.0587);">1/8/2025 8:52:47 am</span>
<span class="t" style="left:627.25px;top:537.00px;font-size:16px;color:#16181b;letter-spacing:0.264px;transform:scaleX(1.0531);">Patel Agro Products</span>
<span class="t" style="left:1032.70px;top:537.00px;font-size:16px;color:#16181b;font-weight:700;letter-spacing:0.389px;transform:scaleX(1.0197);">Amit Patel</span>
<span class="t" style="left:1256.90px;top:537.00px;font-size:16px;color:#1b1e25;letter-spacing:0.071px;transform:scaleX(1.0100);-webkit-text-stroke:0.6px #1b1e25;">33CCCCC0000C1Z1</span>
<span class="t" style="left:1579.00px;top:540.00px;font-size:12px;color:#0b0d10;font-weight:700;letter-spacing:0.311px;transform:scaleX(1.0486);">Quarterly</span>
<span class="t" style="left:362.50px;top:595.00px;font-size:12px;color:#0b0d10;font-weight:700;letter-spacing:0.343px;transform:scaleX(1.0587);">1/8/2025 8:52:47 am</span>
<span class="t" style="left:627.25px;top:592.00px;font-size:16px;color:#16181b;letter-spacing:0.273px;transform:scaleX(1.0514);">Rao Pharmaceuticals</span>
<span class="t" style="left:1032.70px;top:592.00px;font-size:16px;color:#16181b;font-weight:700;letter-spacing:0.224px;transform:scaleX(1.0094);">Sneha Rao</span>
<span class="t" style="left:1256.90px;top:592.00px;font-size:16px;color:#1b1e25;letter-spacing:0.296px;transform:scaleX(1.0431);-webkit-text-stroke:0.6px #1b1e25;">07DDDDD0000D1Z7</span>
<span class="t" style="left:1579.00px;top:595.00px;font-size:12px;color:#0b0d10;font-weight:700;letter-spacing:0.311px;transform:scaleX(1.0486);">Quarterly</span>
<span class="t" style="left:362.50px;top:650.00px;font-size:12px;color:#0b0d10;font-weight:700;letter-spacing:0.343px;transform:scaleX(1.0587);">1/8/2025 8:52:47 am</span>
<span class="t" style="left:628.30px;top:647.00px;font-size:16px;color:#16181b;letter-spacing:0.206px;transform:scaleX(1.0418);">Gupta Electronics &amp; Co.</span>
<span class="t" style="left:1031.69px;top:647.00px;font-size:16px;color:#16181b;font-weight:700;letter-spacing:0.277px;transform:scaleX(1.0124);">Rakesh Gupta</span>
<span class="t" style="left:1255.88px;top:647.00px;font-size:16px;color:#1b1e25;letter-spacing:0.113px;transform:scaleX(1.0167);-webkit-text-stroke:0.6px #1b1e25;">19EEEEE0000E1Z6</span>
<span class="t" style="left:1579.00px;top:650.00px;font-size:12px;color:#0b0d10;font-weight:700;letter-spacing:0.311px;transform:scaleX(1.0486);">Quarterly</span>
<span class="t" style="left:362.50px;top:705.00px;font-size:12px;color:#0b0d10;font-weight:700;letter-spacing:0.343px;transform:scaleX(1.0587);">1/8/2025 8:52:47 am</span>
<span class="t" style="left:627.24px;top:702.00px;font-size:16px;color:#16181b;letter-spacing:0.293px;transform:scaleX(1.0611);">Mehta Constructions Ltd.</span>
<span class="t" style="left:1032.70px;top:702.00px;font-size:16px;color:#16181b;font-weight:700;letter-spacing:0.336px;transform:scaleX(1.0171);">Anjali Mehta</span>
<span class="t" style="left:1256.90px;top:702.00px;font-size:16px;color:#1b1e25;letter-spacing:0.218px;transform:scaleX(1.0339);-webkit-text-stroke:0.6px #1b1e25;">24FFFFF0000F1Z4</span>
<span class="t" style="left:1579.20px;top:705.00px;font-size:12px;color:#0b0d10;font-weight:700;letter-spacing:0.130px;transform:scaleX(1.0171);">Monthly</span>
<span class="t" style="left:362.50px;top:760.00px;font-size:12px;color:#0b0d10;font-weight:700;letter-spacing:0.343px;transform:scaleX(1.0587);">1/8/2025 8:52:47 am</span>
<span class="t" style="left:628.30px;top:757.00px;font-size:16px;color:#16181b;letter-spacing:0.297px;transform:scaleX(1.0577);">Singh Manufacturing Works</span>
<span class="t" style="left:1032.70px;top:757.00px;font-size:16px;color:#16181b;font-weight:700;letter-spacing:0.413px;transform:scaleX(1.0196);">Vikram Singh</span>
<span class="t" style="left:1256.90px;top:757.00px;font-size:16px;color:#1b1e25;letter-spacing:0.205px;transform:scaleX(1.0284);-webkit-text-stroke:0.6px #1b1e25;">06GGGGG0000G1Z2</span>
<span class="t" style="left:1579.20px;top:760.00px;font-size:12px;color:#0b0d10;font-weight:700;letter-spacing:0.130px;transform:scaleX(1.0171);">Monthly</span>
<span class="t" style="left:362.50px;top:815.00px;font-size:12px;color:#0b0d10;font-weight:700;letter-spacing:0.343px;transform:scaleX(1.0587);">1/8/2025 8:52:47 am</span>
<span class="t" style="left:627.26px;top:812.00px;font-size:16px;color:#16181b;letter-spacing:0.196px;transform:scaleX(1.0360);">Desai Fashion House</span>
<span class="t" style="left:1031.68px;top:812.00px;font-size:16px;color:#16181b;font-weight:700;letter-spacing:0.465px;transform:scaleX(1.0239);">Kavita Desai</span>
<span class="t" style="left:1256.90px;top:812.00px;font-size:16px;color:#1b1e25;letter-spacing:0.296px;transform:scaleX(1.0431);-webkit-text-stroke:0.6px #1b1e25;">27HHHHH0000H1Z8</span>
<span class="t" style="left:1579.00px;top:815.00px;font-size:12px;color:#0b0d10;font-weight:700;letter-spacing:0.311px;transform:scaleX(1.0486);">Quarterly</span>
<span class="t" style="left:362.50px;top:870.00px;font-size:12px;color:#0b0d10;font-weight:700;letter-spacing:0.343px;transform:scaleX(1.0587);">1/8/2025 8:52:47 am</span>
<span class="t" style="left:627.25px;top:867.00px;font-size:16px;color:#16181b;letter-spacing:0.275px;transform:scaleX(1.0542);">Kumar Transport Services</span>
<span class="t" style="left:1031.68px;top:867.00px;font-size:16px;color:#16181b;font-weight:700;letter-spacing:0.526px;transform:scaleX(1.0230);">Manoj Kumar</span>
<span><span class="t" style="left:1257.40px;top:867.00px;font-size:16px;color:#1b1e25;letter-spacing:-0.244px;transform:scaleX(0.9799);-webkit-text-stroke:0.6px #1b1e25;">09</span><span class="t" style="left:1275.65px;top:868.00px;font-size:16px;color:#1b1e25;letter-spacing:-1.127px;-webkit-text-stroke:0.5px #1b1e25;font-family:'Liberation Mono', monospace;">IIIII</span><span class="t" style="left:1320.00px;top:867.00px;font-size:16px;color:#1b1e25;letter-spacing:0.500px;transform:scaleX(1.0673);-webkit-text-stroke:0.6px #1b1e25;">0000</span><span class="t" style="left:1360.58px;top:868.00px;font-size:16px;color:#1b1e25;transform:scaleX(0.8750);-webkit-text-stroke:0.5px #1b1e25;font-family:'Liberation Mono', monospace;">I</span><span class="t" style="left:1369.53px;top:867.00px;font-size:16px;color:#1b1e25;letter-spacing:-0.241px;transform:scaleX(0.9736);-webkit-text-stroke:0.6px #1b1e25;">1Z9</span></span>
<span class="t" style="left:1579.20px;top:870.00px;font-size:12px;color:#0b0d10;font-weight:700;letter-spacing:0.130px;transform:scaleX(1.0171);">Monthly</span>
<span class="t" style="left:362.50px;top:925.00px;font-size:12px;color:#0b0d10;font-weight:700;letter-spacing:0.343px;transform:scaleX(1.0587);">1/8/2025 8:52:47 am</span>
<span class="t" style="left:628.30px;top:922.00px;font-size:16px;color:#16181b;letter-spacing:0.246px;transform:scaleX(1.0480);">Joshi Food Exports</span>
<span class="t" style="left:1031.68px;top:922.00px;font-size:16px;color:#16181b;font-weight:700;letter-spacing:0.389px;transform:scaleX(1.0182);">Neha Joshi</span>
<span class="t" style="left:1256.90px;top:922.00px;font-size:16px;color:#1b1e25;letter-spacing:0.500px;transform:scaleX(1.0885);-webkit-text-stroke:0.6px #1b1e25;">32JJJJJ0000J1Z0</span>
<span class="t" style="left:1579.00px;top:925.00px;font-size:12px;color:#0b0d10;font-weight:700;letter-spacing:0.311px;transform:scaleX(1.0486);">Quarterly</span>
</main>
<section>
<span class="t" style="left:126.70px;top:611.00px;font-size:20px;color:#ffffff;transform:scaleX(1.0047);-webkit-text-stroke:0.6px #ffffff;">File Your</span>
<span class="t" style="left:79.26px;top:637.00px;font-size:20px;color:#ffffff;transform:scaleX(1.0421);-webkit-text-stroke:0.6px #ffffff;">Income Tax Return</span>
<span class="t" style="left:125.11px;top:665.00px;font-size:17.6px;color:#a9e8a0;transform:scaleX(0.9852);-webkit-text-stroke:0.4px #a9e8a0;">FY 2024-25</span>
<span class="t" style="left:69.70px;top:700.00px;font-size:20px;color:#0be72c;transform:scaleX(1.0966);-webkit-text-stroke:0.6px #0be72c;">Of your eCommerce</span>
<span class="t" style="left:125.46px;top:725.00px;font-size:20px;color:#0be72c;transform:scaleX(1.0430);-webkit-text-stroke:0.6px #0be72c;">Business</span>
<span><span class="t" style="left:68.38px;top:763.00px;font-size:11px;color:#111111;transform:scaleX(0.9342);-webkit-text-stroke:0.35px #111111;">Before 31</span><span class="t" style="left:113.55px;top:761.00px;font-size:7.2px;color:#111111;transform:scaleX(0.8760);-webkit-text-stroke:0.3px #111111;">st</span><span class="t" style="left:117.99px;top:763.00px;font-size:11px;color:#111111;transform:scaleX(0.9773);-webkit-text-stroke:0.35px #111111;"> July 2025 to avoid panalty fees.</span></span>
<span class="t" style="left:80.88px;top:789.00px;font-size:11px;color:#111111;transform:scaleX(0.9782);-webkit-text-stroke:0.35px #111111;">Claim refund of your TDS Deductions.</span>
<span class="t" style="left:124.72px;top:841.00px;font-size:17.5px;color:#14251a;transform:scaleX(0.9288);-webkit-text-stroke:0.3px #14251a;">Know More</span>
</section>
<header>
<span class="t" style="left:20.90px;top:88.00px;font-size:23.3px;color:#141f6f;font-weight:700;transform:scaleX(0.9316);">GST</span>
<span class="t" style="left:20.26px;top:108.00px;font-size:22.5px;color:#2f6ce8;font-weight:700;transform:scaleX(0.9943);">ProSe</span>
<span class="t" style="left:96.25px;top:108.00px;font-size:22.5px;color:#2f6ce8;font-weight:700;transform:scaleX(1.0417);">e</span>
<span class="t" style="left:110.00px;top:111.00px;font-size:18.5px;color:#2f6ce8;font-weight:700;transform:scaleX(0.9375);font-family:'DejaVu Sans', sans-serif;">₹</span>
</header></div>
</div></body></html>
